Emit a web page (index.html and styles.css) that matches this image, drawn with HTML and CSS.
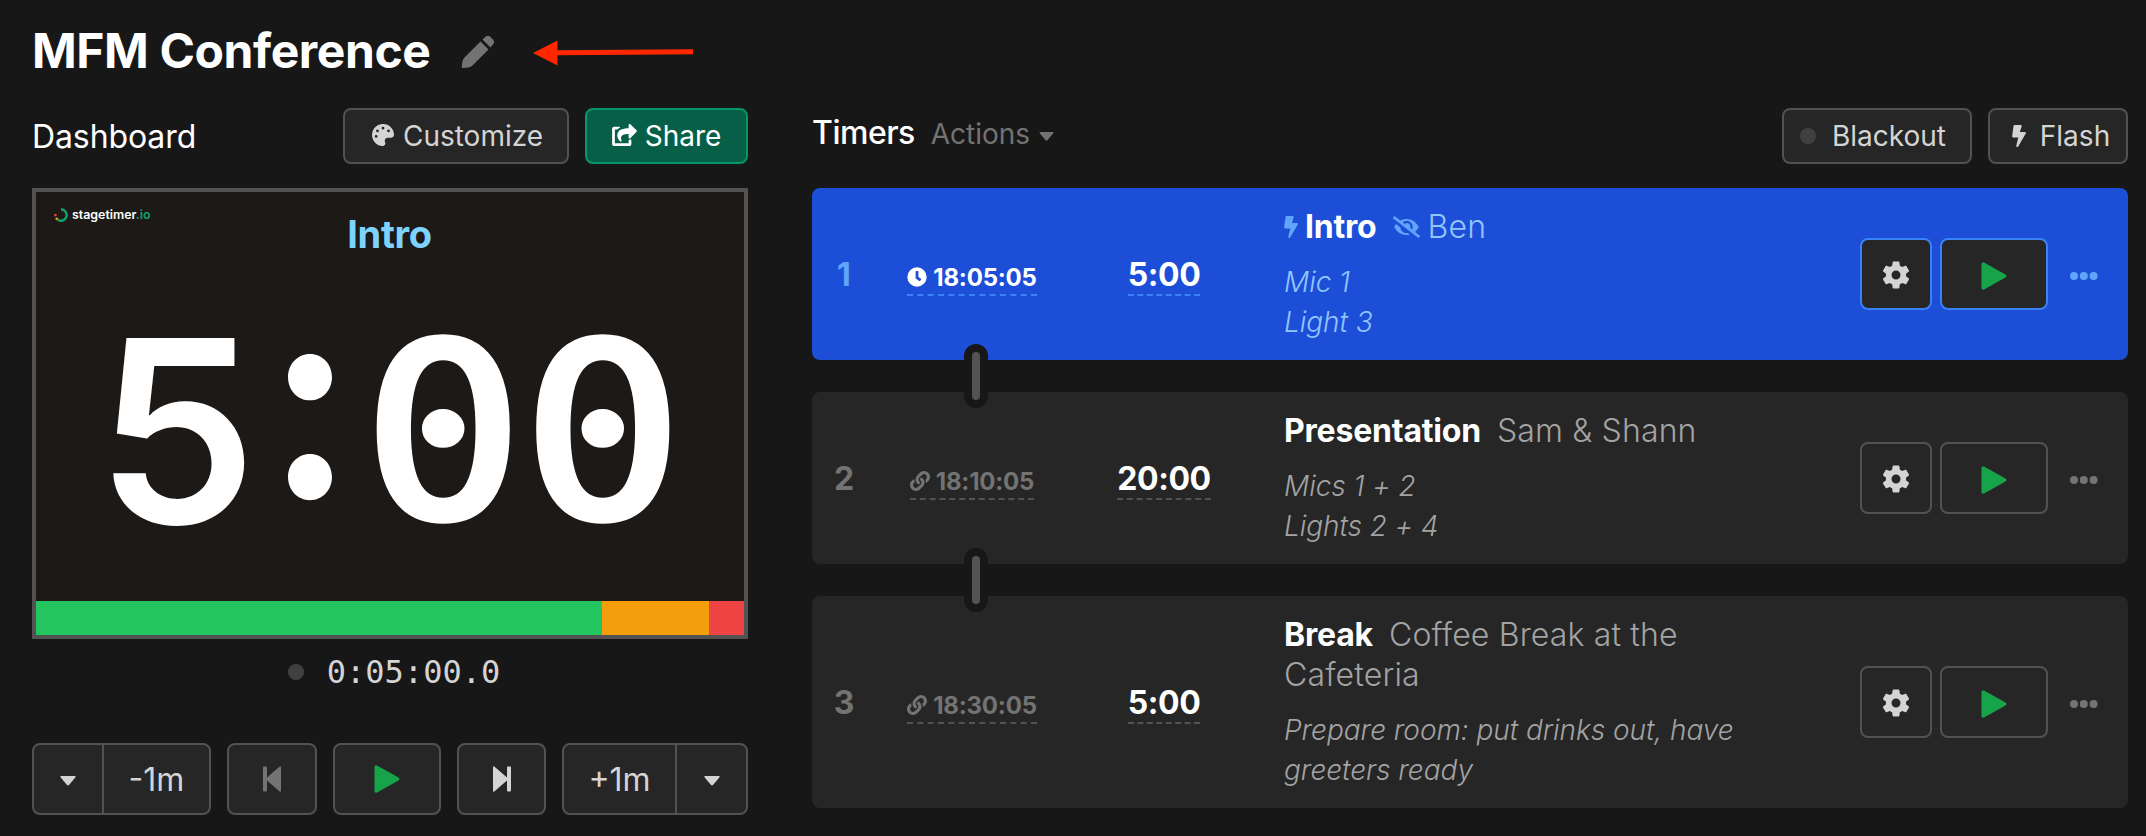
FILE: index.html
```
<!DOCTYPE html>
<html lang="en">
<head>
  <meta charset="UTF-8" />
  <meta name="viewport" content="width=device-width, initial-scale=1" />
  <title>MFM Conference | stagetimer.io</title>
  <link rel="stylesheet" href="styles.css">
</head>
<body>
  <svg class="sprite" aria-hidden="true">
    <symbol id="i-pencil" viewBox="0 0 34 34"><path d="M19.500 6.500 27.500 14.500 11.500 30.500Q9.500 32.500 6 32.800L1 33Q.6 33 .7 32.500L1.200 28Q1.500 24.500 3.500 22.500zM21.500 4.500 24.500 1.800Q27-.2 29.500 2L32 4.500Q34.200 7 32 9.500L29.500 12.500z"/></symbol>
    <symbol id="i-palette" viewBox="0 0 512 512"><path fill-rule="evenodd" d="M204 6C105 25 25 105 6 203c-37 191 131 326 256 307 41-6 61-54 42-91-23-45 10-98 61-98h79c37 0 68-31 68-69C511 95 368-26 204 6zM96 320a32 32 0 1 1 0-64 32 32 0 0 1 0 64zm32-128a32 32 0 1 1 0-64 32 32 0 0 1 0 64zm128-64a32 32 0 1 1 0-64 32 32 0 0 1 0 64zm128 64a32 32 0 1 1 0-64 32 32 0 0 1 0 64z"/></symbol>
    <symbol id="i-share" viewBox="0 0 576 512"><path d="M568 178 424 330c-15 16-40 5-40-17v-83c-146 1-204 37-165 161 5 14-12 25-24 17-39-28-75-82-75-136 0-134 110-174 264-175V24c0-22 25-32 40-17l144 138c10 9 10 24 0 33zM384 380v68H64V128h50c4 0 8-2 11-5 15-16 33-29 53-38 11-5 7-21-5-21H48C21 64 0 86 0 112v352c0 26 21 48 48 48h352c27 0 48-22 48-48v-88c0-11-10-18-21-15-9 3-19 4-28 3-7-1-15 5-15 16z"/></symbol>
    <symbol id="i-bolt" viewBox="0 0 320 512"><path d="M296 160H180l43-129C227 15 215 0 200 0H56C44 0 34 9 32 21L0 261c-2 14 9 27 24 27h119L97 483c-4 15 8 29 23 29 8 0 16-4 21-12l176-304c9-16-2-36-21-36z"/></symbol>
    <symbol id="i-clock" viewBox="0 0 512 512"><path fill-rule="evenodd" d="M256 8a248 248 0 1 0 0 496 248 248 0 0 0 0-496zm57 350-88-64c-3-3-5-6-5-10V116c0-7 5-12 12-12h48c7 0 12 5 12 12v138l67 48c5 4 6 12 2 17l-28 39c-4 5-14 6-20 0z"/></symbol>
    <symbol id="i-link" viewBox="0 0 512 512"><path d="M326.600 185.400c59.700 59.800 58.900 155.700.4 214.600l-.4.4-67.200 67.200c-59.300 59.300-155.700 59.300-215 0-59.300-59.300-59.300-155.700 0-215l37.100-37.100c9.800-9.800 26.800-3.300 27.300 10.600.6 17.700 3.800 35.500 9.700 52.700 2 5.800.6 12.300-3.800 16.600l-13.100 13.100c-28 28-28.900 73.700-1.200 102 28 28.600 74.100 28.700 102.300.5l67.200-67.200c28.200-28.200 28.100-73.800 0-101.800-3.700-3.700-7.400-6.600-10.300-8.600a16 16 0 0 1-6.900-12.600c-.4-10.600 3.300-21.500 11.700-29.800l21-21c5.500-5.500 14.200-6.200 20.600-1.700a152.500 152.500 0 0 1 20.600 17.100zM467.500 44.400c-59.300-59.300-155.700-59.300-215 0l-67.200 67.200-.4.400c-58.500 58.900-59.300 154.800.4 214.600a152.500 152.500 0 0 0 20.500 17.100c6.400 4.500 15.100 3.800 20.600-1.700l21-21c8.400-8.400 12.100-19.200 11.700-29.800a16 16 0 0 0-6.900-12.600c-2.900-2-6.600-4.900-10.300-8.600-28.100-28.100-28.200-73.600 0-101.800l67.200-67.200c28.200-28.200 74.300-28.100 102.300.5 27.800 28.300 26.900 73.900-1.200 102l-13.100 13.100c-4.400 4.400-5.800 10.800-3.800 16.600 5.900 17.200 9 35 9.700 52.700.5 13.900 17.500 20.400 27.300 10.600l37.100-37.100c59.300-59.300 59.300-155.700 0-215z"/></symbol>
    <symbol id="i-eye-off" viewBox="0 0 640 512"><path d="M320 400c-76 0-137-58-143-133L72 186c-14 17-26 36-37 55a32 32 0 0 0 0 29C90 376 197 448 320 448c27 0 53-4 78-10l-52-41c-8 2-17 3-26 3zm314 58L523 372c34-28 61-63 82-102a32 32 0 0 0 0-29C550 136 443 64 320 64c-51 0-101 13-147 37L45 3A16 16 0 0 0 23 6L3 31a16 16 0 0 0 3 23l589 455a16 16 0 0 0 22-3l20-25a16 16 0 0 0-3-23zM450 316l-39-31c3-9 5-19 5-29a95 95 0 0 0-121-93c6 9 9 19 9 29 0 3-1 7-1 10l-75-57A143 143 0 0 1 450 316z"/></symbol>
    <symbol id="i-gear" viewBox="2 2 20 20"><path fill-rule="evenodd" d="M19.140 12.940c.04-.3.060-.61.060-.94 0-.32-.02-.64-.07-.94l2.030-1.580a.49.49 0 0 0 .12-.61l-1.920-3.320a.49.49 0 0 0-.59-.22l-2.390.96c-.5-.38-1.030-.7-1.620-.94l-.36-2.540a.48.48 0 0 0-.48-.41h-3.840a.47.47 0 0 0-.47.410l-.36 2.540c-.59.240-1.130.57-1.620.94l-2.390-.96a.48.48 0 0 0-.59.220L2.740 8.870a.47.47 0 0 0 .12.610l2.030 1.580c-.05.3-.09.630-.09.940s.02.640.07.940l-2.030 1.580a.49.49 0 0 0-.12.610l1.920 3.320c.12.220.37.290.59.220l2.390-.96c.5.380 1.030.7 1.620.940l.36 2.540c.05.240.24.410.48.410h3.840c.24 0 .44-.17.470-.41l.36-2.540c.59-.24 1.130-.56 1.620-.94l2.390.96c.22.080.47 0 .59-.22l1.920-3.320a.47.47 0 0 0-.12-.61zM12 15.200a3.200 3.200 0 1 1 0-6.400 3.200 3.200 0 0 1 0 6.400z"/></symbol>
    <symbol id="i-play" viewBox="0 0 26 28"><path d="M.5 2.500Q.5-.8 3.500.8L24 12.300Q27 14 24 15.700L3.500 27.200Q.5 28.800.5 25.500z"/></symbol>
    <symbol id="i-next" viewBox="0 0 18 26"><path d="M0 1.500Q0-.5 1.600.8L14 11.500V1.500Q14 .5 15 .5H17Q18 .5 18 1.500V24.500Q18 25.500 17 25.500H15Q14 25.500 14 24.500V14.500L1.600 25.200Q0 26.500 0 24.500z"/></symbol>
    <symbol id="i-caret" viewBox="0 0 16 10"><path d="M1.500 0H14.500Q16.500 0 15.300 1.600L9.200 8.800Q8 10 6.800 8.800L.7 1.600Q-.5 0 1.500 0z"/></symbol>
    <symbol id="i-dots" viewBox="0 0 28 8"><circle cx="4" cy="4" r="4"/><circle cx="13.800" cy="4" r="4"/><circle cx="23.600" cy="4" r="4"/></symbol>
  </svg>

  <header class="page-header">
    <h1>MFM Conference</h1>
    <svg class="edit"><use href="#i-pencil"/></svg>
    <svg class="arrow" viewBox="0 0 160 26"><path d="M0 13 24.500.5V10.300L160 9.300V14.300L24.500 15.300V25.500z"/></svg>
  </header>

  <main>
    <section class="dashboard">
      <div class="section-head">
        <h2>Dashboard</h2>
        <div class="button-row">
          <button class="button customize"><svg class="icon"><use href="#i-palette"/></svg>Customize</button>
          <button class="button share"><svg class="icon"><use href="#i-share"/></svg>Share</button>
        </div>
      </div>

      <div class="preview">
        <div class="logo">
          <svg viewBox="0 0 14 14"><path d="M7 1.300A5.700 5.700 0 1 1 4 11.900" stroke="#10a36e"/><path d="M3.700 11.600A5.700 5.700 0 0 1 2.100 9.800" stroke="#f59e0b"/><path d="M1.500 8.200A5.700 5.700 0 0 1 1.500 6" stroke="#ef4444"/></svg>
          <span>stagetimer<b>.io</b></span>
        </div>
        <div class="preview-title">Intro</div>
        <div class="preview-time"><span class="min">5</span><span class="colon">:</span><span class="sec">00</span></div>
        <div class="progress">
          <div class="green"></div>
          <div class="amber"></div>
          <div class="red"></div>
        </div>
      </div>

      <div class="status"><span class="dot"></span><span class="clock">0:05:00.0</span></div>

      <div class="controls">
        <div class="split minus">
          <button><svg class="caret"><use href="#i-caret"/></svg></button>
          <button>-1m</button>
        </div>
        <button class="button skip prev"><svg><use href="#i-next"/></svg></button>
        <button class="button play"><svg><use href="#i-play"/></svg></button>
        <button class="button skip next"><svg><use href="#i-next"/></svg></button>
        <div class="split plus">
          <button>+1m</button>
          <button><svg class="caret"><use href="#i-caret"/></svg></button>
        </div>
      </div>
    </section>

    <section class="timers">
      <div class="section-head">
        <div class="timers-title">
          <h2>Timers</h2>
          <span class="actions">Actions <svg><use href="#i-caret"/></svg></span>
        </div>
        <div class="button-row">
          <button class="button blackout"><span class="dot"></span>Blackout</button>
          <button class="button flash"><svg class="icon"><use href="#i-bolt"/></svg>Flash</button>
        </div>
      </div>

      <div class="timer-list">
        <article class="timer active">
          <div class="number">1</div>
          <div class="start"><span class="dashed"><svg><use href="#i-clock"/></svg>18:05:05</span></div>
          <div class="duration"><span class="dashed">5:00</span></div>
          <div class="details">
            <div class="title"><svg class="bolt"><use href="#i-bolt"/></svg><strong>Intro</strong><svg class="eye"><use href="#i-eye-off"/></svg>Ben</div>
            <div class="notes">Mic 1<br>Light 3</div>
          </div>
          <button class="button gear"><svg><use href="#i-gear"/></svg></button>
          <button class="button play"><svg><use href="#i-play"/></svg></button>
          <svg class="more"><use href="#i-dots"/></svg>
          <span class="connector"></span>
        </article>

        <article class="timer">
          <div class="number">2</div>
          <div class="start"><span class="dashed"><svg><use href="#i-link"/></svg>18:10:05</span></div>
          <div class="duration"><span class="dashed">20:00</span></div>
          <div class="details">
            <div class="title"><strong>Presentation</strong>Sam &amp; Shann</div>
            <div class="notes">Mics 1 + 2<br>Lights 2 + 4</div>
          </div>
          <button class="button gear"><svg><use href="#i-gear"/></svg></button>
          <button class="button play"><svg><use href="#i-play"/></svg></button>
          <svg class="more"><use href="#i-dots"/></svg>
          <span class="connector"></span>
        </article>

        <article class="timer">
          <div class="number">3</div>
          <div class="start"><span class="dashed"><svg><use href="#i-link"/></svg>18:30:05</span></div>
          <div class="duration"><span class="dashed">5:00</span></div>
          <div class="details">
            <div class="title"><strong>Break</strong>Coffee Break at the Cafeteria</div>
            <div class="notes">Prepare room: put drinks out, have greeters ready</div>
          </div>
          <button class="button gear"><svg><use href="#i-gear"/></svg></button>
          <button class="button play"><svg><use href="#i-play"/></svg></button>
          <svg class="more"><use href="#i-dots"/></svg>
        </article>
      </div>
    </section>
  </main>
</body>
</html>
```
FILE: styles.css
```
*, *::before, *::after { box-sizing: border-box; }

body {
  margin: 0;
  height: 836px;
  overflow: hidden;
  padding: 20px 18px 0 32px;
  font-family: Inter, sans-serif;
  background-color: #171717;
  color: #fff;
}

h1, h2 { margin: 0; }

svg {
  display: block;
  fill: currentColor;
  flex-shrink: 0;
}

.sprite {
  position: absolute;
  width: 0;
  height: 0;
}

button {
  font-family: inherit;
  color: #d4d4d4;
  cursor: pointer;
}

.page-header {
  display: flex;
  align-items: center;
  height: 64px;
}

.page-header h1 {
  font-size: 48px;
  font-weight: 700;
  letter-spacing: -0.4px;
  width: 397px;
  margin-top: -3px;
  white-space: nowrap;
}

.edit {
  width: 34px;
  height: 34px;
  margin-left: 32px;
  color: #737373;
}

.arrow {
  width: 160px;
  height: 26px;
  margin: 2px 0 0 38px;
  color: #ff2600;
}

main {
  display: grid;
  grid-template-columns: 716px 1316px;
  gap: 64px;
  margin-top: 24px;
}

.section-head {
  display: flex;
  justify-content: space-between;
  align-items: center;
  height: 56px;
  margin-bottom: 24px;
}

.section-head h2 {
  font-size: 32px;
  font-weight: 400;
  letter-spacing: -0.1px;
}

.button-row {
  display: flex;
  gap: 16px;
}

.button {
  display: flex;
  align-items: center;
  justify-content: center;
  height: 56px;
  padding: 0;
  background-color: #262626;
  border: 2px solid #525252;
  border-radius: 8px;
  font-size: 28px;
}

.customize { width: 226px; gap: 9px; padding-left: 3px; }
.customize .icon { width: 22px; height: 22px; margin-top: -3px; }

.share {
  width: 163px;
  gap: 8px;
  background-color: #065f46;
  border-color: #059669;
  color: #fff;
}

.share .icon { width: 25px; height: 22px; margin-top: -3px; }

.preview {
  position: relative;
  display: flex;
  flex-direction: column;
  height: 451px;
  border: 4px solid #525252;
  background-color: #1c1917;
}

.logo {
  position: absolute;
  top: 15px;
  left: 18px;
  display: flex;
  align-items: center;
  gap: 4px;
  font-size: 12.400px;
  font-weight: 600;
}

.logo svg {
  width: 14px;
  height: 14px;
  fill: none;
  stroke-width: 2.400;
}

.logo b { color: #10a36e; font-weight: 600; }

.preview-title {
  padding: 18px 1px 0 0;
  line-height: 48px;
  text-align: center;
  font-size: 38px;
  font-weight: 700;
  letter-spacing: -0.3px;
  color: #7dd3fc;
}

.preview-time {
  flex-grow: 1;
  display: flex;
  align-items: baseline;
  justify-content: center;
  padding-top: 42px;
  line-height: 1;
}

.preview-time span {
  display: block;
  text-align: center;
}

.min {
  width: 160px;
  margin: 0 2px 0 -2px;
  font-size: 256px;
  font-weight: 600;
}

.colon {
  width: 104px;
  font-size: 260px;
  font-weight: 700;
  transform: translateY(-32px) scaleY(1.06);
}

.sec {
  width: 320px;
  margin: 0 -1px 0 1px;
  font-family: "DejaVu Sans Mono", monospace;
  font-size: 265px;
  transform: translateY(1px) scaleY(0.91);
  -webkit-text-stroke: 8px #fff;
}

.progress {
  display: flex;
  height: 34px;
}

.green { width: 80%; background-color: #22c55e; }
.amber { width: 15%; background-color: #f59e0b; }
.red { width: 5%; background-color: #ef4444; }

.dot {
  width: 16px;
  height: 16px;
  border-radius: 50%;
  background-color: #404040;
}

.status {
  display: flex;
  align-items: center;
  justify-content: center;
  gap: 23px;
  height: 66px;
  margin-bottom: 38px;
  padding-left: 8px;
}

.clock {
  font-family: "DejaVu Sans Mono", monospace;
  font-size: 32px;
  color: #d4d4d4;
}

.controls {
  display: flex;
  gap: 16px;
}

.controls .button { height: 72px; }
.controls .prev { width: 90px; }
.controls .next { width: 89px; }
.controls .play { width: 108px; }

.skip svg { width: 18px; height: 26px; }
.prev svg { transform: scaleX(-1); color: #737373; }

.play svg {
  width: 26px;
  height: 28px;
  color: #16a34a;
}

.split {
  display: flex;
  height: 72px;
  border: 2px solid #525252;
  border-radius: 8px;
  background-color: #262626;
  overflow: hidden;
}

.split button {
  display: flex;
  align-items: center;
  justify-content: center;
  flex: 1;
  padding: 0;
  background: none;
  border: 0;
  font-size: 32px;
}

.split button + button { border-left: 2px solid #525252; }

.minus { width: 179px; }
.minus button:first-child { flex: 0 0 68px; }
.plus { width: 186px; }
.plus button:last-child { flex: 0 0 71px; }

.caret { width: 16px; height: 10px; margin-top: 4px; }

.timers-title {
  display: flex;
  align-items: baseline;
  gap: 16px;
  margin-top: -8px;
}

.timers-title h2 { font-weight: 500; letter-spacing: -0.5px; }

.actions {
  display: flex;
  align-items: center;
  gap: 9px;
  font-size: 28px;
  color: #737373;
}

.actions svg { width: 15px; height: 9px; margin-top: 6px; }

.blackout { width: 190px; gap: 16px; }
.flash { width: 140px; gap: 14px; }
.flash .icon { width: 14px; height: 22px; margin-top: -1px; }
.blackout { padding-right: 8px; }
.flash { padding-left: 6px; }

.timer-list {
  display: flex;
  flex-direction: column;
  gap: 32px;
}

.timer {
  position: relative;
  display: flex;
  align-items: center;
  padding: 18px 0;
  border-radius: 8px;
  background-color: #262626;
}

.number {
  width: 64px;
  padding-top: 1px;
  text-align: center;
  font-size: 32px;
  font-weight: 700;
  color: #737373;
}

.start {
  width: 192px;
  display: flex;
  justify-content: center;
  font-size: 24px;
  font-weight: 700;
  letter-spacing: -0.2px;
  color: #737373;
}

.start svg { width: 20px; height: 20px; }

.duration {
  width: 192px;
  display: flex;
  justify-content: center;
  font-size: 32px;
  font-weight: 700;
  letter-spacing: -0.4px;
}

.dashed {
  display: flex;
  align-items: center;
  gap: 6px;
  height: 44px;
  padding-top: 2px;
  border-bottom: 2px dashed #525252;
}

.start .dashed { padding-top: 8px; }

.details {
  width: 500px;
  margin-left: 24px;
  line-height: 40px;
  color: #a3a3a3;
}

.title {
  padding-top: 1px;
  font-size: 32px;
  font-weight: 350;
  letter-spacing: 0.15px;
}

.title strong {
  font-weight: 700;
  letter-spacing: -0.2px;
  color: #fff;
  margin-right: 16px;
}

.title svg { display: inline-block; }

.bolt { width: 14px; height: 22px; margin-right: 7px; color: #60a5fa; }
.eye { width: 27px; height: 22px; margin-right: 8px; color: #60a5fa; }

.notes {
  margin-top: 15px;
  font-size: 28px;
  font-style: italic;
  font-weight: 350;
  letter-spacing: -0.05px;
}

.timer .button { height: 72px; }
.timer .gear { width: 72px; margin-left: 76px; }
.timer .play { width: 108px; margin-left: 8px; }
.gear svg { width: 28px; height: 28px; margin-top: 2px; }
.timer .play svg { margin-top: 3px; }

.more {
  width: 28px;
  height: 8px;
  margin: 4px 0 0 22px;
  color: #737373;
}

.connector {
  position: absolute;
  left: 152px;
  bottom: -48px;
  z-index: 1;
  width: 24px;
  height: 64px;
  border: 8px solid #171717;
  border-radius: 12px;
  background-color: #525252;
}

.active { background-color: #1d4ed8; }
.active .number, .active .more { color: #60a5fa; }
.active .start { color: #fff; }
.active .dashed, .active .button { border-color: #3b82f6; }
.active .details { color: #93c5fd; }
```
